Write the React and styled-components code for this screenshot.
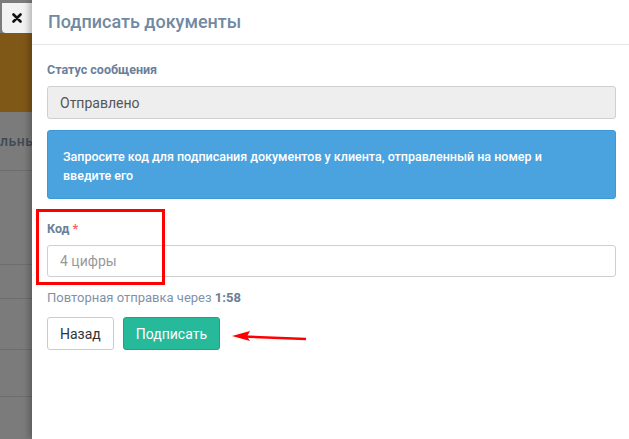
import React from "react";
import styled, { createGlobalStyle } from "styled-components";

const GlobalStyle = createGlobalStyle`
  html, body { margin: 0; padding: 0; }
  body {
    font-family: Roboto, "Liberation Sans", sans-serif;
    background: #7b7b7b;
    overflow: hidden;
  }
`;

const Screen = styled.div`
  display: flex;
  width: 629px;
  height: 439px;
  overflow: hidden;
`;

const Backdrop = styled.div`
  flex: none;
  width: 32px;
  display: flex;
  flex-direction: column;
  background: #7b7b7b;
  padding-top: 3px;
  box-sizing: border-box;
`;

const CloseButton = styled.button`
  flex: none;
  height: 30px;
  margin-left: 2px;
  border: none;
  border-radius: 0 0 0 4px;
  background: #f2f2f2;
  display: flex;
  align-items: center;
  padding: 0 0 0 10px;
`;

const Brown = styled.div`
  flex: none;
  height: 79px;
  background: #7f5717;
`;

const BgRow = styled.div`
  flex: none;
  height: ${(p) => p.h}px;
  border-bottom: 1px solid #6d6d6d;
  color: #3e4a56;
  font-size: 14px;
  font-weight: 500;
  line-height: ${(p) => p.h}px;
  white-space: nowrap;
  letter-spacing: 0.5px;
`;

const Panel = styled.div`
  flex: 1;
  position: relative;
  background: #fff;
  box-shadow: -3px 0 6px rgba(0, 0, 0, 0.25);
  display: flex;
  flex-direction: column;
`;

const Header = styled.div`
  height: 45px;
  border-bottom: 1px solid #e5e5e5;
  display: flex;
  align-items: center;
  padding: 0 16px;
  box-sizing: border-box;
`;

const Title = styled.h2`
  margin: 0 0 2px;
  font-size: 18px;
  font-weight: 500;
  color: #7189a3;
`;

const Body = styled.div`
  padding: 17px 13px 0 15px;
  display: flex;
  flex-direction: column;
`;

const Label = styled.label`
  font-size: 12.5px;
  font-weight: 700;
  color: #6a8099;
  line-height: 16px;
  margin-bottom: ${(p) => p.mb || 8}px;
`;

const Star = styled.span`
  color: #f5635b;
  margin-left: 3px;
`;

const Input = styled.div`
  height: ${(p) => p.h}px;
  box-sizing: border-box;
  border: 1px solid #cfcfcf;
  border-radius: 3px;
  background: ${(p) => (p.disabled ? "#eeeeee" : "#fff")};
  color: ${(p) => (p.placeholder ? "#999" : "#555")};
  font-size: 14px;
  display: flex;
  align-items: center;
  padding: 0 12px;
`;

const Alert = styled.div`
  margin-top: 11px;
  height: 69px;
  box-sizing: border-box;
  background: #4aa3df;
  border: 1px solid #3d98d6;
  border-radius: 3px;
  color: #fff;
  font-size: 12.5px;
  font-weight: 500;
  line-height: 19px;
  padding: 16px 15px 0;
`;

const CodeGroup = styled.div`
  margin-top: 22px;
  display: flex;
  flex-direction: column;
`;

const Resend = styled.div`
  margin-top: 13px;
  font-size: 13px;
  color: #7f92a8;
  line-height: 16px;
  b { color: #6a7f95; }
`;

const Buttons = styled.div`
  margin-top: 11px;
  display: flex;
  gap: 9px;
`;

const Button = styled.button`
  height: 33px;
  box-sizing: border-box;
  padding: 0 ${(p) => (p.primary ? 12 : 12)}px;
  border-radius: 3px;
  font-family: inherit;
  font-size: 14px;
  border: 1px solid ${(p) => (p.primary ? "#1fa386" : "#cccccc")};
  background: ${(p) => (p.primary ? "#26b99a" : "#fff")};
  color: ${(p) => (p.primary ? "#fff" : "#333")};
`;

const Highlight = styled.div`
  position: absolute;
  left: 4px;
  top: 209px;
  width: 129px;
  height: 76px;
  box-sizing: border-box;
  border: 3px solid #f00;
  pointer-events: none;
`;

const Arrow = styled.svg`
  position: absolute;
  left: 198px;
  top: 328px;
`;

export default function App() {
  return (
    <>
      <GlobalStyle />
      <Screen>
        <Backdrop>
          <CloseButton aria-label="Закрыть">
            <svg width="10" height="10" viewBox="0 0 10 10">
              <path d="M1.5 1.5 L8.5 8.5 M8.5 1.5 L1.5 8.5" stroke="#111" strokeWidth="2.6" strokeLinecap="round" />
            </svg>
          </CloseButton>
          <Brown />
          <BgRow h={58}>льны</BgRow>
          <BgRow h={93} />
          <BgRow h={33} />
          <BgRow h={50} />
          <BgRow h={46} />
        </Backdrop>
        <Panel>
          <Header>
            <Title>Подписать документы</Title>
          </Header>
          <Body>
            <Label>Статус сообщения</Label>
            <Input h={33} disabled>Отправлено</Input>
            <Alert>
              Запросите код для подписания документов у клиента, отправленный на номер и
              <br />
              введите его
            </Alert>
            <CodeGroup>
              <Label mb={8}>
                Код<Star>*</Star>
              </Label>
              <Input h={32} placeholder>4 цифры</Input>
            </CodeGroup>
            <Resend>
              Повторная отправка через <b>1:58</b>
            </Resend>
            <Buttons>
              <Button>Назад</Button>
              <Button primary>Подписать</Button>
            </Buttons>
          </Body>
          <Highlight />
          <Arrow width="80" height="16" viewBox="0 0 80 16">
            <path d="M76 11 L14 8.5" stroke="#f00" strokeWidth="2.5" fill="none" />
            <path d="M2 8 L20 3 L17 8.5 L20 13 Z" fill="#f00" />
          </Arrow>
        </Panel>
      </Screen>
    </>
  );
}
